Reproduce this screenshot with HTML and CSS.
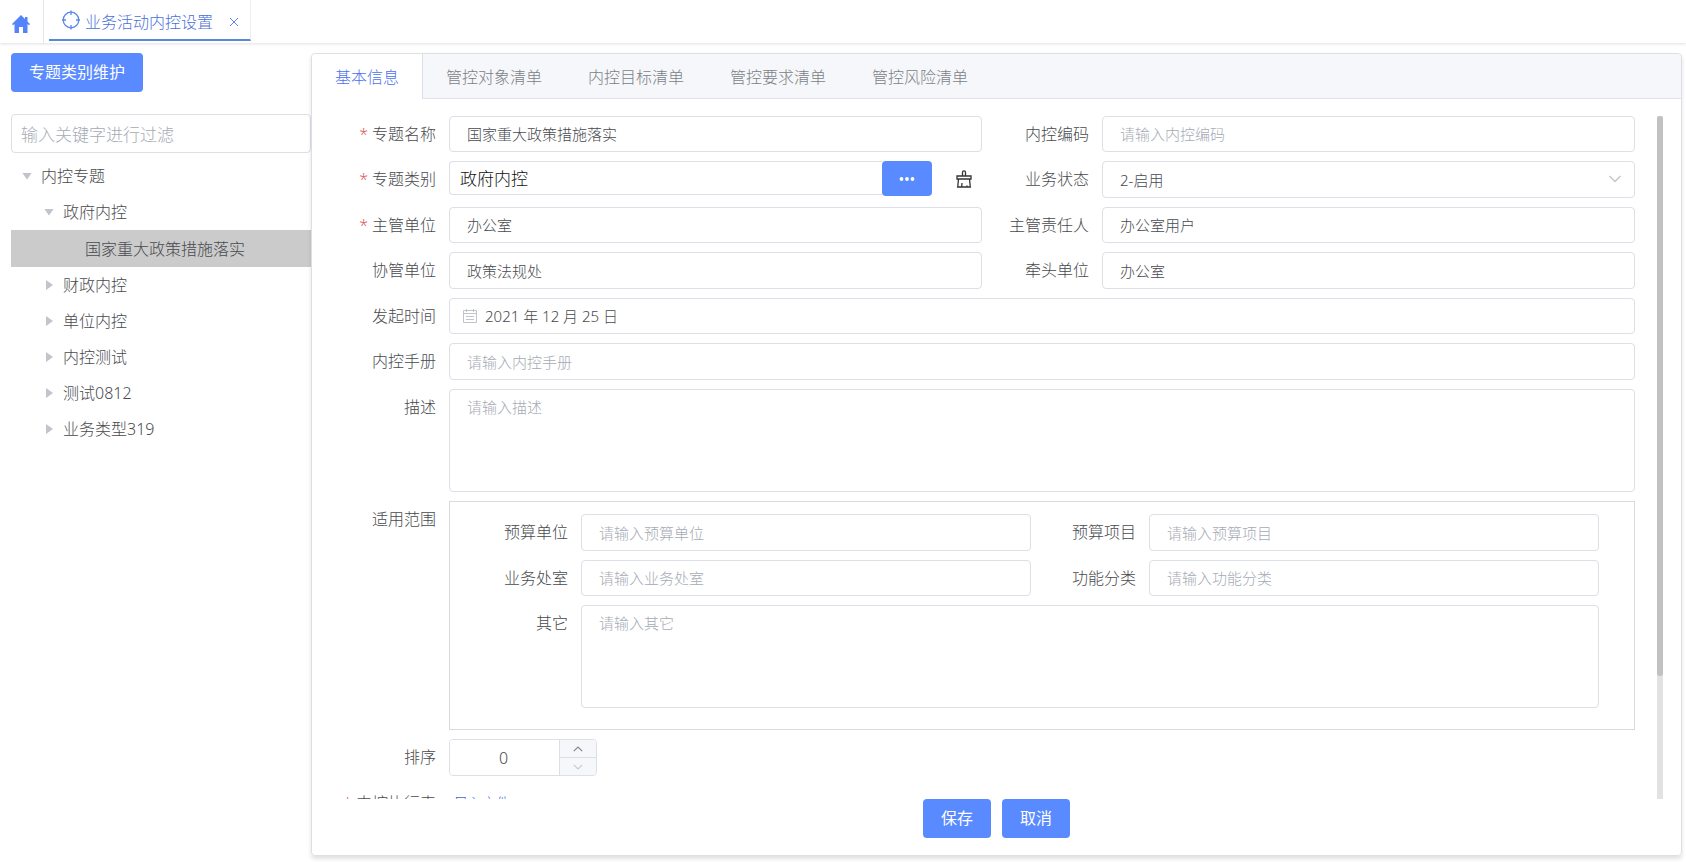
FILE: index.html
```html
<!DOCTYPE html>
<html lang="zh-CN">
<head>
<meta charset="utf-8">
<title>业务活动内控设置</title>
<link rel="stylesheet" href="styles.css">
</head>
<body>
<header class="topbar">
  <a class="home" href="#" aria-label="首页">
    <svg width="18" height="18" viewBox="0 0 18 18"><path fill="#5384fb" d="M9 0 0 9l1 1.200L2.500 9V18H7v-6h4v6h4.500V9L17 10.200 18 9l-2.500-2.600V2H13v2z"/></svg>
  </a>
  <div class="page-tab">
    <svg class="target" width="18" height="20" viewBox="0 0 18 20" fill="none" stroke="#5c86ea" stroke-width="1.300"><circle cx="9" cy="10" r="7.800"/><path d="M9 0.500v4.500M9 15v4.500M0 10h4M14 10h4"/></svg>
    <span>业务活动内控设置</span>
    <button class="tab-close" type="button" aria-label="关闭">
      <svg width="10" height="10" viewBox="0 0 10 10" stroke="#5c86ea" stroke-width="1"><path d="M1 1l8 8M9 1l-8 8"/></svg>
    </button>
  </div>
</header>
<div class="layout">
  <aside class="sidebar">
    <button class="btn" type="button">专题类别维护</button>
    <input class="filter" type="text" placeholder="输入关键字进行过滤" aria-label="过滤">
    <ul class="tree">
      <li class="node"><span class="caret open"></span>内控专题</li>
      <li class="node child"><span class="caret open"></span>政府内控</li>
      <li class="node leaf selected">国家重大政策措施落实</li>
      <li class="node child"><span class="caret"></span>财政内控</li>
      <li class="node child"><span class="caret"></span>单位内控</li>
      <li class="node child"><span class="caret"></span>内控测试</li>
      <li class="node child"><span class="caret"></span>测试0812</li>
      <li class="node child"><span class="caret"></span>业务类型319</li>
    </ul>
  </aside>
  <main class="panel">
    <nav class="tabs">
      <a class="tab active" href="#">基本信息</a>
      <a class="tab" href="#">管控对象清单</a>
      <a class="tab" href="#">内控目标清单</a>
      <a class="tab" href="#">管控要求清单</a>
      <a class="tab" href="#">管控风险清单</a>
    </nav>
    <div class="scroll">
      <form class="form" id="form">
        <div class="row">
          <div class="field"><label class="required" for="name">专题名称</label><input class="box" id="name" value="国家重大政策措施落实"></div>
          <div class="field"><label for="code">内控编码</label><input class="box" id="code" placeholder="请输入内控编码"></div>
        </div>
        <div class="row">
          <div class="field"><label class="required" for="type">专题类别</label>
            <div class="picker">
              <input class="picker-input" id="type" value="政府内控">
              <button class="more" type="button" aria-label="选择"><svg width="16" height="4" viewBox="0 0 16 4" fill="#fff"><circle cx="2.500" cy="2" r="1.900"/><circle cx="8" cy="2" r="1.900"/><circle cx="13.500" cy="2" r="1.900"/></svg></button>
              <button class="clear" type="button" aria-label="清除"><svg width="16" height="18" viewBox="0 0 16 18" fill="none" stroke="#333" stroke-width="1.300"><path d="M6.500 6V2.200C6.500 1.200 7 0.800 8 0.800s1.500.4 1.500 1.400V6M1 6h14v3H1zM2.500 9 1.700 17h12.600l-.8-8M5.600 17l.4-4M11 17v-1.500"/></svg></button>
            </div>
          </div>
          <div class="field"><label for="state">业务状态</label>
            <div class="select-wrap"><select class="box" id="state"><option>2-启用</option></select>
            <svg class="arrow" width="12" height="8" viewBox="0 0 12 8" fill="none" stroke="#c0c4cc" stroke-width="1.300"><path d="M0.500 1 6 6.500 11.500 1"/></svg></div>
          </div>
        </div>
        <div class="row">
          <div class="field"><label class="required" for="dept">主管单位</label><input class="box" id="dept" value="办公室"></div>
          <div class="field"><label for="owner">主管责任人</label><input class="box" id="owner" value="办公室用户"></div>
        </div>
        <div class="row">
          <div class="field"><label for="assist">协管单位</label><input class="box" id="assist" value="政策法规处"></div>
          <div class="field"><label for="lead">牵头单位</label><input class="box" id="lead" value="办公室"></div>
        </div>
        <div class="row">
          <div class="field wide"><label for="date">发起时间</label>
            <div class="box date">
              <svg width="14" height="14" viewBox="0 0 14 14" fill="none" stroke="#c0c4cc"><path d="M.5 1.500h13v12H.5zM.5 4.500h13M3.500 0v3M10.500 0v3M3 7.500h8M3 10.500h8"/></svg>
              <input class="date-input" id="date" value="2021 年 12 月 25 日">
            </div>
          </div>
        </div>
        <div class="row">
          <div class="field wide"><label for="manual">内控手册</label><input class="box" id="manual" placeholder="请输入内控手册"></div>
        </div>
        <div class="row">
          <div class="field wide"><label for="desc">描述</label><textarea class="box area" id="desc" placeholder="请输入描述"></textarea></div>
        </div>
        <div class="row">
          <div class="field wide"><span class="label">适用范围</span>
            <div class="range">
              <div class="row">
                <div class="field"><label for="bu">预算单位</label><input class="box" id="bu" placeholder="请输入预算单位"></div>
                <div class="field"><label for="bp">预算项目</label><input class="box" id="bp" placeholder="请输入预算项目"></div>
              </div>
              <div class="row">
                <div class="field"><label for="office">业务处室</label><input class="box" id="office" placeholder="请输入业务处室"></div>
                <div class="field"><label for="func">功能分类</label><input class="box" id="func" placeholder="请输入功能分类"></div>
              </div>
              <div class="row">
                <div class="field wide"><label for="other">其它</label><textarea class="box area" id="other" placeholder="请输入其它"></textarea></div>
              </div>
            </div>
          </div>
        </div>
        <div class="row">
          <div class="field wide"><label for="sort">排序</label>
            <div class="number">
              <input class="number-input" id="sort" value="0">
              <div class="steps">
                <button class="step" type="button" aria-label="增加"><svg width="10" height="6" viewBox="0 0 10 6" fill="none" stroke="#85888e" stroke-width="1.200"><path d="M.8 5.200 5 1l4.200 4.200"/></svg></button>
                <button class="step" type="button" aria-label="减少"><svg width="10" height="6" viewBox="0 0 10 6" fill="none" stroke="#c8cbd2" stroke-width="1.200"><path d="M.8.8 5 5 9.200.8"/></svg></button>
              </div>
            </div>
          </div>
        </div>
        <div class="row">
          <div class="field wide"><span class="label required">内控执行表</span><a class="upload" href="#">导入文件</a></div>
        </div>
      </form>
      <div class="track"><div class="thumb"></div></div>
    </div>
    <footer class="actions">
      <button class="btn" type="submit" form="form">保存</button>
      <button class="btn" type="button">取消</button>
    </footer>
  </main>
</div>
</body>
</html>
```
FILE: styles.css
```css
* { box-sizing: border-box; }
body {
  margin: 0;
  height: 100vh;
  display: flex;
  flex-direction: column;
  overflow: hidden;
  background: #fff;
  color: #484a4e;
  font: 300 16px/20px "Noto Sans", "Noto Sans CJK SC", sans-serif;
}
input, button, select, textarea { font: inherit; color: inherit; margin: 0; }
button { cursor: pointer; }
a { text-decoration: none; }
svg { display: block; flex: none; }

.topbar {
  display: flex;
  flex: none;
  height: 43px;
  box-shadow: 0 1px 3px rgba(0, 0, 0, .12);
}
.home {
  display: flex;
  align-items: center;
  width: 44px;
  padding: 4px 0 0 12px;
  border-right: 1px solid #e4e7ed;
}
.page-tab {
  display: flex;
  align-items: center;
  margin: 0 0 2px 5px;
  padding: 5px 11px 0 13px;
  border-right: 1px solid #ebeef5;
  border-bottom: 2px solid #5a88d8;
  color: #4a70dc;
  gap: 5px;
}
.target { margin-bottom: 4px; }
.tab-close { border: 0; background: none; padding: 0 0 0 11px; }

.layout { display: flex; flex: 1; min-height: 0; padding: 10px 4px 6px 11px; }
.sidebar { width: 300px; flex: none; }
.btn {
  height: 39px;
  border: 0;
  border-radius: 4px;
  padding: 0 18px 2px;
  background: #5a8aff;
  color: #fff;
  font-weight: 400;
}
.filter {
  display: block;
  width: 100%;
  height: 39px;
  margin-top: 22px;
  padding: 1px 9px 0;
  border: 1px solid #dcdfe6;
  border-radius: 4px;
  font-size: 17px;
}
::placeholder { color: #a6abb5; opacity: 1; }
.tree { list-style: none; margin: 5px 0 0; padding: 0; }
.node { display: flex; align-items: center; height: 36px; padding-left: 11px; }
.node.child { padding-left: 33px; }
.node.leaf { padding-left: 74px; }
.node.selected { height: 37px; background: #cbcbcb; }
.caret {
  width: 19px;
  flex: none;
}
.caret::before {
  content: "";
  display: block;
  width: 7px;
  height: 10px;
  margin-left: 2px;
  background: #c0c4cc;
  clip-path: polygon(0 0, 100% 50%, 0 100%);
}
.caret.open::before {
  width: 10px;
  height: 7px;
  margin-left: 0;
  clip-path: polygon(0 0, 100% 0, 50% 100%);
}

.panel {
  flex: 1;
  min-width: 0;
  display: flex;
  flex-direction: column;
  border: 1px solid #dcdfe6;
  border-radius: 4px;
  box-shadow: 0 3px 4px rgba(0, 0, 0, .12);
}
.tabs {
  display: flex;
  flex: none;
  height: 45px;
  background: #f5f7fa;
  border-bottom: 1px solid #e0e3ea;
  border-radius: 4px 4px 0 0;
}
.tab { padding: 13px 23px 0; color: #7c7f86; }
.tab.active {
  margin-bottom: -1px;
  background: #fff;
  color: #4a70f0;
  border-right: 1px solid #dcdfe6;
  border-radius: 4px 0 0 0;
}

.scroll { display: flex; flex: 1; min-height: 0; padding: 17px 18px 0 17px; }
.form {
  flex: 1;
  min-width: 0;
  display: flex;
  flex-direction: column;
  gap: 9px;
  overflow: hidden;
  margin-right: 22px;
}
.row {
  flex: none;
  display: grid;
  grid-template-columns: 1fr 1fr;
  min-height: 36px;
}
.row:nth-child(even) { min-height: 37px; }
.field { display: flex; gap: 13px; min-width: 0; }
.wide { grid-column: 1 / -1; }
label, .label {
  width: 107px;
  flex: none;
  padding-top: 8px;
  text-align: right;
}
.required::before { content: "*"; margin-right: 4px; color: #e05c5c; }
.box {
  flex: 1;
  width: 100%;
  min-width: 0;
  border: 1px solid #dcdfe6;
  border-radius: 4px;
  padding: 0 17px;
  background: #fff;
  font-size: 15px;
}
.area { height: 103px; padding-top: 7px; resize: none; display: block; }
.picker { flex: 1; min-width: 0; display: flex; align-items: flex-start; }
.picker-input {
  flex: 1;
  min-width: 0;
  height: 34px;
  padding: 0 10px 2px;
  border: 1px solid #dcdfe6;
  border-right: 0;
  border-radius: 4px 0 0 4px;
  color: #111;
  font-size: 17px;
}
.more {
  display: flex;
  align-items: center;
  justify-content: center;
  width: 50px;
  height: 35px;
  border: 0;
  border-radius: 4px;
  background: #5a8aff;
}
.clear { border: 0; background: none; padding: 9px 10px 0 24px; }
.select-wrap { flex: 1; display: flex; position: relative; }
.select-wrap select { appearance: none; }
.arrow { position: absolute; right: 14px; top: 14px; pointer-events: none; }
.date { display: flex; align-items: center; gap: 8px; padding-left: 13px; }
.date-input { flex: 1; border: 0; padding: 0; background: none; outline: 0; }
.range {
  flex: 1;
  min-width: 0;
  display: flex;
  flex-direction: column;
  gap: 9px;
  border: 1px solid #d8dade;
  padding: 12px 35px 21px 13px;
}
.range label { width: 105px; }
.range .row:nth-child(odd) { min-height: 37px; }
.range .row:nth-child(even) { min-height: 36px; }
.number {
  display: flex;
  width: 148px;
  height: 37px;
  border: 1px solid #dcdfe6;
  border-radius: 4px;
  overflow: hidden;
}
.number-input { flex: 1; min-width: 0; border: 0; padding: 0 2px 0 0; text-align: center; }
.steps {
  display: flex;
  flex-direction: column;
  width: 37px;
  border-left: 1px solid #dcdfe6;
  background: #f5f7fa;
}
.step {
  flex: 1;
  display: flex;
  align-items: center;
  justify-content: center;
  border: 0;
  padding: 0;
  background: none;
}
.step + .step { border-top: 1px solid #dcdfe6; }
.upload { padding: 8px 0 0 5px; font-size: 14px; color: #3a68d8; }

.track { width: 6px; flex: none; background: #e2e2e2; }
.thumb { height: 82%; background: #c1c1c1; border-radius: 3px; }
.actions {
  flex: none;
  display: flex;
  justify-content: center;
  gap: 11px;
  padding-bottom: 17px;
}
```
